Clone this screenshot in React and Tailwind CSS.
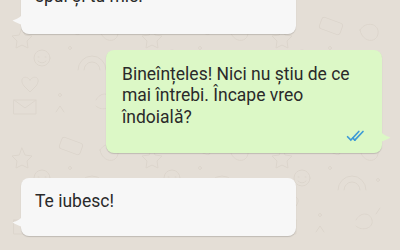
import React from "react"

const Tail = ({ side, color }) => {
  if (side === "left") {
    return (
      <svg className="absolute left-[-9px] bottom-[8px]" width="12" height="16" viewBox="0 0 12 16">
        <path d="M12 0 C11 6 6 9 0.5 10.5 C4 12.5 8 14 12 16 Z" fill={color} />
      </svg>
    )
  }
  return (
    <svg className="absolute right-[-9px] bottom-[10px]" width="12" height="16" viewBox="0 0 12 16">
      <path d="M0 0 C1 6 6 9 11.5 10.5 C8 12.5 4 14 0 16 Z" fill={color} />
    </svg>
  )
}

const DoubleTick = () => (
  <svg width="21" height="12" viewBox="0 0 20 11" fill="none" stroke="#3d9ad6" strokeWidth="1.6" strokeLinecap="round">
    <path d="M1.5 6.2 L4.6 9.4 L12.2 1.2" />
    <path d="M8.4 9.4 L16.2 1.2" />
    <path d="M6.6 7.6 L8.4 9.4" />
  </svg>
)

const Doodles = () => (
  <svg className="absolute inset-0" width="400" height="250">
    <defs>
      <pattern id="doodle" width="130" height="120" patternUnits="userSpaceOnUse">
        <g fill="none" stroke="#dcd5cc" strokeWidth="1" strokeLinecap="round" strokeLinejoin="round">
          <path d="M22 28 l3 7 7 1 -5 5 1 7 -6 -3 -6 3 1 -7 -5 -5 7 -1z" />
          <circle cx="42" cy="58" r="8" />
          <path d="M38 57 h1 M45 57 h1 M38 61 q4 4 8 0" />
          <path d="M30 80 c-4 -6 -12 -2 -6 6 l6 6 6 -6 c6 -8 -2 -12 -6 -6z" />
          <rect x="60" y="20" width="22" height="12" rx="3" transform="rotate(20 71 26)" />
          <path d="M78 70 a14 14 0 0 1 28 0 M84 70 a8 8 0 0 1 16 0" />
          <path d="M14 100 h22 v14 h-22z M14 100 l11 8 11 -8" />
          <path d="M96 100 c4 -8 14 -8 16 0 c2 8 -10 12 -16 6" />
          <path d="M100 30 c6 -10 20 -6 18 4 c-2 10 -16 8 -18 -4z" />
          <circle cx="60" cy="95" r="1.5" />
          <circle cx="70" cy="48" r="1.5" />
          <circle cx="118" cy="60" r="1.5" />
          <path d="M56 112 l4 -6 4 6 M120 88 l-4 6" />
        </g>
      </pattern>
    </defs>
    <rect width="400" height="250" fill="url(#doodle)" />
  </svg>
)

export default function App() {
  return (
    <div className="relative h-[250px] w-[400px] overflow-hidden bg-[#e4ded6] font-['Roboto',sans-serif] text-[17.5px] leading-[21.5px] text-[#2a2a2a]">
      <Doodles />
      <div className="relative flex flex-col">
        <div className="relative ml-[21px] mt-[-27px] w-[275px] rounded-[8px] bg-[#f7f7f7] pl-[14px] pr-[14px] pt-[13px] pb-[26px] shadow-[0_1px_1px_rgba(0,0,0,0.16)]">
          <Tail side="left" color="#f7f7f7" />
          <p>spui și tu mie.</p>
        </div>

        <div className="relative ml-[106px] mt-[16px] w-[276px] rounded-[8px] bg-[#dcf8c6] pl-[16px] pr-[15px] pt-[14px] pb-[11px] shadow-[0_1px_1px_rgba(0,0,0,0.16)]">
          <Tail side="right" color="#dcf8c6" />
          <p>Bineînțeles! Nici nu știu de ce mai întrebi. Încape vreo îndoială?</p>
          <div className="mt-[2px] flex justify-end">
            <DoubleTick />
          </div>
        </div>

        <div className="relative ml-[21px] mt-[25px] w-[275px] rounded-[8px] bg-[#f7f7f7] pl-[14px] pr-[14px] pt-[13px] pb-[23px] shadow-[0_1px_1px_rgba(0,0,0,0.16)]">
          <Tail side="left" color="#f7f7f7" />
          <p>Te iubesc!</p>
        </div>
      </div>
    </div>
  )
}
